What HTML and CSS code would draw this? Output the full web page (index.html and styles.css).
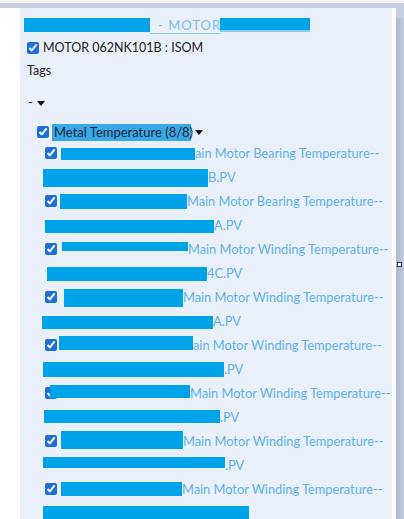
FILE: index.html
```html
<!DOCTYPE html>
<html>
<head>
<meta charset="utf-8">
<link rel="stylesheet" href="styles.css">
</head>
<body>
<div class="topbar"></div>
<div class="band"></div>
<div class="main">
  <div class="gutter"></div>
  <div class="panel">
    <div class="title"><span class="rd t1"></span><span class="ttext">- MOTOR</span><span class="rd t2"></span></div>
    <div class="row motor"><input type="checkbox" class="cb" checked><span>MOTOR 062NK101B : ISOM</span></div>
    <div class="row tags">Tags</div>
    <div class="row dash"><span>-</span><span class="caret"></span></div>
    <div class="group">
      <div class="grouprow"><input type="checkbox" class="cb" checked><span class="sel">Metal Temperature (8/8)</span><span class="caret"></span></div>
      <div class="items">
        <div class="item">
          <div class="ln"><input type="checkbox" class="cb" checked><span class="rd a1"></span><span>ain Motor Bearing Temperature--</span></div>
          <div class="ln"><span class="rd b1"></span><span>B.PV</span></div>
        </div>
        <div class="item">
          <div class="ln"><input type="checkbox" class="cb" checked><span class="rd a2"></span><span>Main Motor Bearing Temperature--</span></div>
          <div class="ln"><span class="rd b2"></span><span>A.PV</span></div>
        </div>
        <div class="item">
          <div class="ln"><input type="checkbox" class="cb" checked><span class="rd a3"></span><span>Main Motor Winding Temperature--</span></div>
          <div class="ln"><span class="rd b3"></span><span>4C.PV</span></div>
        </div>
        <div class="item">
          <div class="ln"><input type="checkbox" class="cb" checked><span class="rd a4"></span><span>Main Motor Winding Temperature--</span></div>
          <div class="ln"><span class="rd b4"></span><span>A.PV</span></div>
        </div>
        <div class="item">
          <div class="ln"><input type="checkbox" class="cb" checked><span class="rd a5"></span><span>ain Motor Winding Temperature--</span></div>
          <div class="ln"><span class="rd b5"></span><span>.PV</span></div>
        </div>
        <div class="item">
          <div class="ln"><input type="checkbox" class="cb" checked><span class="rd a6"></span><span>Main Motor Winding Temperature--</span></div>
          <div class="ln"><span class="rd b6"></span><span>.PV</span></div>
        </div>
        <div class="item">
          <div class="ln"><input type="checkbox" class="cb" checked><span class="rd a7"></span><span>Main Motor Winding Temperature--</span></div>
          <div class="ln"><span class="rd b7"></span><span>.PV</span></div>
        </div>
        <div class="item">
          <div class="ln"><input type="checkbox" class="cb" checked><span class="rd a8"></span><span>Main Motor Winding Temperature--</span></div>
          <div class="ln"><span class="rd b8"></span></div>
        </div>
      </div>
    </div>
  </div>
  <div class="edge"></div>
  <div class="scroll"><div class="handle"></div></div>
</div>
</body>
</html>
```
FILE: styles.css
```css
html, body {
  margin: 0;
  padding: 0;
  background: #ffffff;
  overflow: hidden;
}
body {
  font-family: Lato, "Open Sans", sans-serif;
  width: 404px;
  height: 519px;
}
.topbar {
  height: 3px;
  background: #f1f1f1;
}
.band {
  height: 5px;
  background: #c6cedf;
}
.main {
  display: flex;
  height: 511px;
}
.gutter {
  width: 20px;
  flex: none;
  background: #ffffff;
}
.panel {
  width: 372px;
  flex: none;
  background: #eaf0f9;
  padding-top: 7px;
  box-sizing: border-box;
  overflow: hidden;
  white-space: nowrap;
}
.edge {
  width: 4px;
  flex: none;
  background: #ffffff;
}
.scroll {
  width: 8px;
  flex: none;
  position: relative;
  background: linear-gradient(#c6cedf 0 10px, transparent 10px),
              linear-gradient(to right, #aeb9cc, #c3cbdc);
}
.handle {
  position: absolute;
  left: 1px;
  top: 254px;
  width: 3px;
  height: 3px;
  background: #ffffff;
  border: 1px solid #333;
}
.rd {
  display: inline-block;
  background: #00a2e8;
  vertical-align: top;
}
.title {
  height: 20px;
  line-height: 20px;
  padding-left: 4px;
  font-size: 13px;
  letter-spacing: 1px;
  color: #78bff0;
  display: flex;
  align-items: flex-start;
}
.title .ttext {
  display: inline-block;
  border-bottom: 1px solid #8ccaf2;
  line-height: 16px;
  margin-top: 2px;
  padding-left: 8px;
  width: 70px;
  box-sizing: border-box;
}
.t1 { width: 126px; height: 14px; margin-top: 3px; flex: none; }
.t2 { width: 90px; height: 12px; margin-top: 3px; flex: none; box-shadow: 0 2px 0 #8ccaf2; }
.row {
  height: 20px;
  line-height: 20px;
  font-size: 12.5px;
  color: #222;
  display: flex;
  align-items: center;
}
.cb {
  width: 12px;
  height: 12px;
  margin: 0;
  accent-color: #1b6fd6;
  flex: none;
}
.motor {
  margin-top: 3px;
  padding-left: 7px;
}
.motor .cb { margin-right: 4px; }
.tags {
  margin-top: 3px;
  padding-left: 7px;
}
.dash {
  margin-top: 12px;
  padding-left: 8px;
}
.caret {
  display: inline-block;
  width: 0;
  height: 0;
  border-left: 4px solid transparent;
  border-right: 4px solid transparent;
  border-top: 5px solid #111;
  margin-left: 4px;
}
.group {
  margin-top: 10px;
}
.grouprow {
  height: 18px;
  display: flex;
  align-items: center;
  padding-left: 17px;
  font-size: 13px;
  color: #1d2833;
}
.sel {
  background: #38a8e8;
  height: 17px;
  line-height: 17px;
  margin-left: 3px;
  padding: 0 2px;
  width: 139px;
  box-sizing: border-box;
}
.grouprow .caret { margin-left: 4px; }
.items {
  padding-left: 23px;
  font-size: 12.8px;
  color: #5eb2ec;
}
.ln {
  height: 24px;
  line-height: 24px;
}
.ln .cb {
  vertical-align: top;
  margin: 6px 2px 0 2px;
}
.a1 { margin-left: 2px; width: 134px; height: 12px; margin-top: 7px; }
.b1 { width: 165px; height: 18px; margin-top: 4px; }
.a2 { margin-left: 1px; width: 127px; height: 15px; margin-top: 5px; }
.b2 { margin-left: 2px; width: 169px; height: 13px; margin-top: 7px; }
.a3 { margin-left: 3px; width: 126px; height: 9px; margin-top: 5px; }
.b3 { margin-left: 4px; width: 160px; height: 14px; margin-top: 6px; }
.a4 { margin-left: 5px; width: 119px; height: 18px; margin-top: 4px; }
.b4 { margin-left: -1px; width: 171px; height: 13px; margin-top: 7px; }
.a5 { margin-left: 0; width: 134px; height: 14px; margin-top: 3px; }
.b5 { width: 181px; height: 15px; margin-top: 5px; }
.a6 { margin-left: -9px; width: 140px; height: 13px; margin-top: 4px; }
.b6 { margin-left: 1px; width: 176px; height: 13px; margin-top: 5px; }
.a7 { margin-left: 2px; width: 122px; height: 18px; margin-top: 2px; }
.b7 { width: 182px; height: 11px; margin-top: 4px; }
.a8 { margin-left: 2px; width: 121px; height: 14px; margin-top: 5px; }
.b8 { width: 206px; height: 18px; margin-top: 5px; }
```
